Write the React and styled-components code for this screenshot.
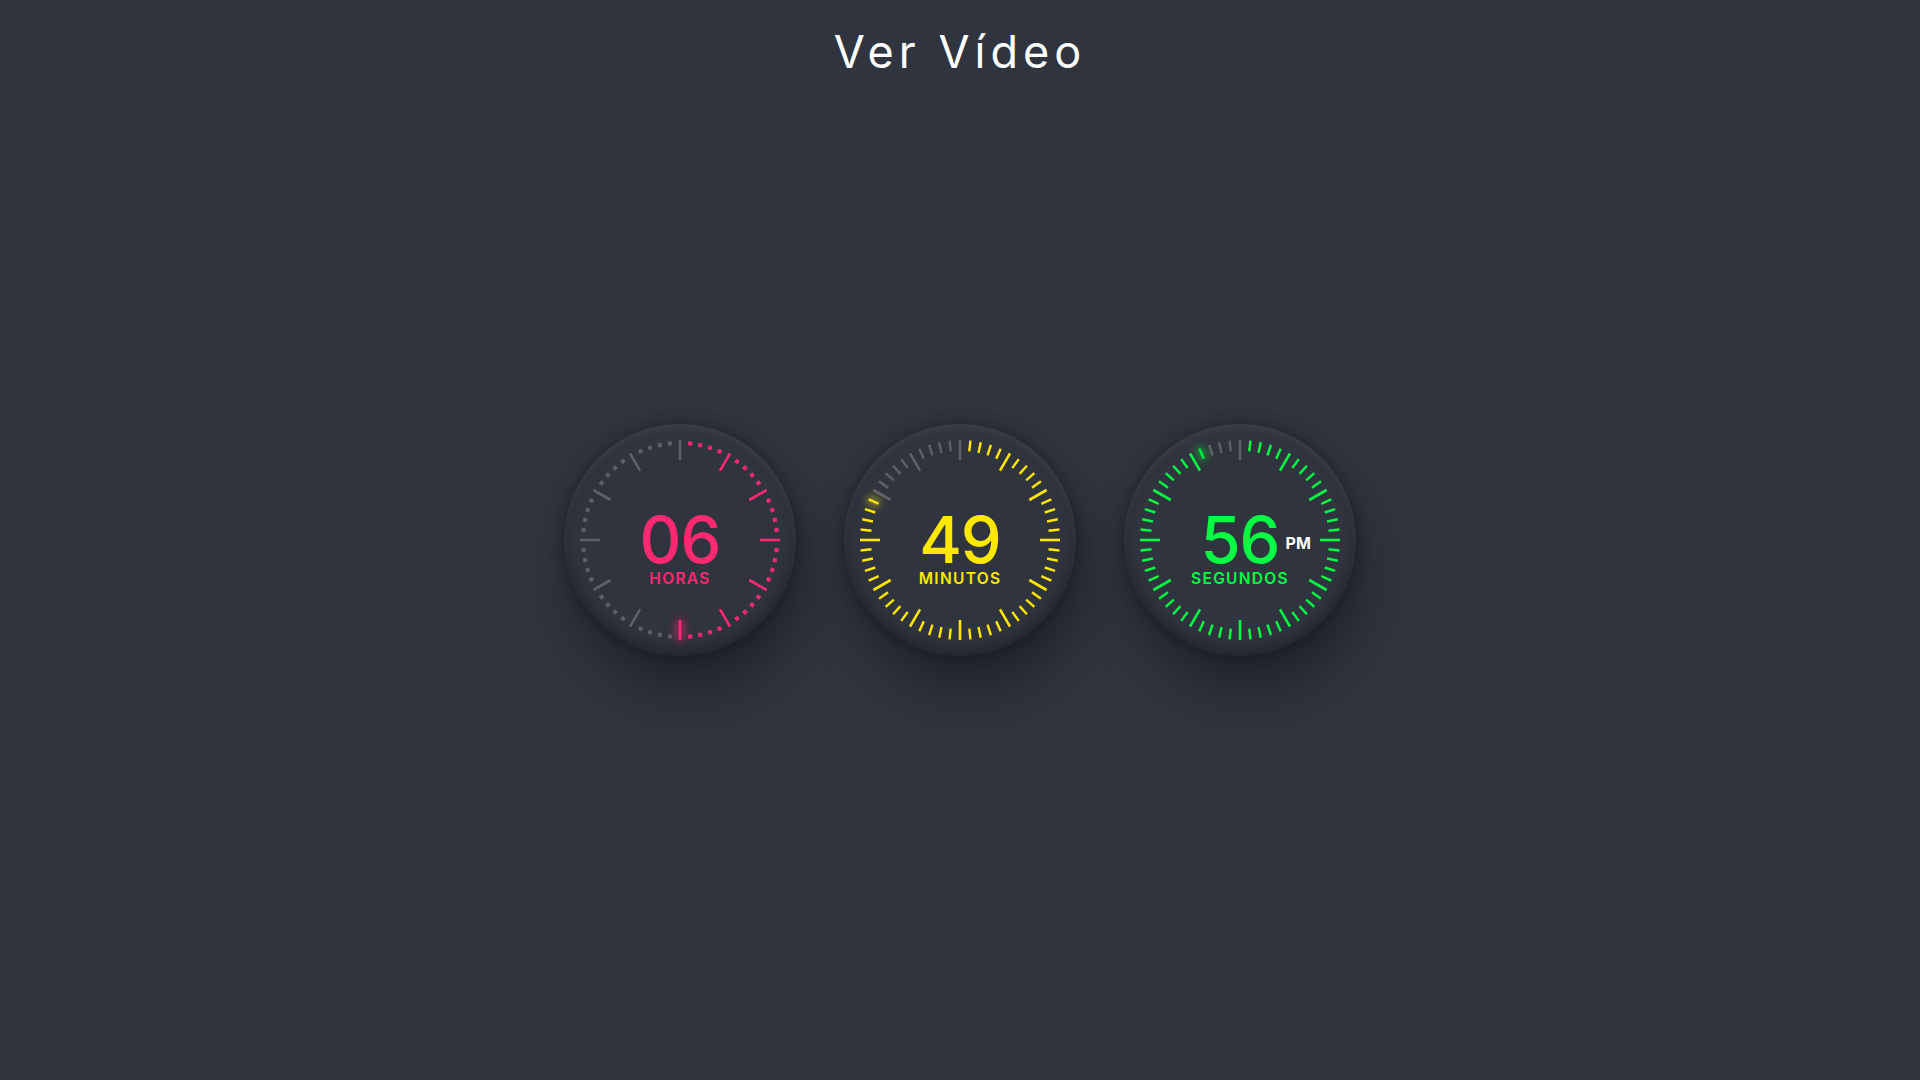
import React from 'react'
import styled, {createGlobalStyle} from 'styled-components'

const GlobalStyle = createGlobalStyle`
    html, body {
        margin: 0;
        padding: 0;
        background: #2f343f;
    }
    body {
        font-family: Inter, "Open Sans", sans-serif;
    }
`

const Page = styled.main`
    display: grid;
    grid-template-rows: 100px 1fr 100px;
    height: 100vh;
    box-sizing: border-box;
`

const Title = styled.h1`
    margin: 0;
    padding-top: 25px;
    text-align: center;
    color: #ffffff;
    font-family: Inter, "Open Sans", sans-serif;
    font-weight: 400;
    font-size: 45px;
    line-height: 1.2;
    letter-spacing: 5px;
`

const Clocks = styled.section`
    display: flex;
    align-items: center;
    justify-content: center;
    gap: 48px;
`

const Dial = styled.div`
    position: relative;
    width: 232px;
    height: 232px;
    border-radius: 50%;
    background: #30343e;
    box-shadow: 8px 36px 50px rgba(0, 0, 0, 0.3),
        0 0 16px rgba(0, 0, 0, 0.3),
        inset 0 4px 6px rgba(255, 255, 255, 0.07),
        inset 0 -6px 14px rgba(0, 0, 0, 0.3);
    display: flex;
    align-items: center;
    justify-content: center;
`

const Ticks = styled.svg`
    position: absolute;
    inset: 0;
    overflow: visible;
`

const Readout = styled.div`
    display: flex;
    flex-direction: column;
    align-items: center;
    color: ${p => p.color};
    margin-top: 19px;
`

const Number = styled.div`
    position: relative;
    font-size: 65px;
    font-weight: 500;
    line-height: 56px;
    letter-spacing: -1px;
`

const Meridiem = styled.span`
    position: absolute;
    left: 100%;
    top: 23px;
    margin-left: 6px;
    color: #ffffff;
    font-size: 16px;
    line-height: 1;
    font-weight: 700;
    letter-spacing: 0;
`

const Label = styled.div`
    margin-top: 2px;
    font-size: 15.5px;
    line-height: 18px;
    font-weight: 600;
    letter-spacing: 1.3px;
`

const GRAY = 'rgba(255, 255, 255, 0.22)'

const Clock = ({value, active, color, label, dots, suffix}) => {
    const c = 116
    const id = `glow-${label}`
    return (
        <Dial>
            <Ticks width="232" height="232" viewBox="0 0 232 232">
                <defs>
                    <filter id={id} filterUnits="userSpaceOnUse" x="-20" y="-20" width="272" height="272">
                        <feGaussianBlur stdDeviation="5" result="b" />
                        <feMerge>
                            <feMergeNode in="b" />
                            <feMergeNode in="b" />
                            <feMergeNode in="SourceGraphic" />
                        </feMerge>
                    </filter>
                </defs>
                {Array.from({length: 60}, (_, i) => {
                    const on = i >= 1 && i <= active
                    const stroke = on ? color : GRAY
                    const rot = `rotate(${i * 6} ${c} ${c})`
                    const glow = i === active ? `url(#${id})` : undefined
                    if (i % 5 === 0) {
                        return <line key={i} x1={c} y1={c - 100} x2={c} y2={c - 80} stroke={stroke} strokeWidth="2.6" transform={rot} filter={glow} />
                    }
                    if (dots) {
                        return <rect key={i} x={c - 2} y={c - 99} width="4" height="4" fill={stroke} transform={rot} filter={glow} />
                    }
                    return <line key={i} x1={c} y1={c - 100} x2={c} y2={c - 89} stroke={stroke} strokeWidth="2.4" transform={rot} filter={glow} />
                })}
            </Ticks>
            <Readout color={color}>
                <Number>
                    {value}
                    {suffix && <Meridiem>{suffix}</Meridiem>}
                </Number>
                <Label>{label}</Label>
            </Readout>
        </Dial>
    )
}

const App = () =>
    <>
        <GlobalStyle />
        <Page>
            <Title>Ver Vídeo</Title>
            <Clocks>
                <Clock value="06" active={30} color="#ff2972" label="HORAS" dots />
                <Clock value="49" active={49} color="#fee800" label="MINUTOS" />
                <Clock value="56" active={56} color="#04fc43" label="SEGUNDOS" suffix="PM" />
            </Clocks>
            <div />
        </Page>
    </>

export default App
